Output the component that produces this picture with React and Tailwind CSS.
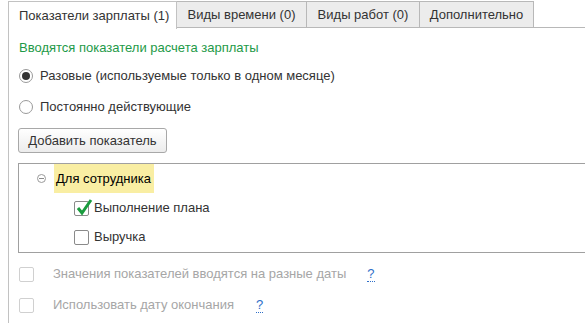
import React from 'react'

const tabs = ['Виды времени (0)', 'Виды работ (0)', 'Дополнительно']

const Radio = ({ checked, label }) => (
  <div className="h-[30px] flex items-center ml-px">
    <span className="w-[14px] h-[14px] rounded-full border border-[#9a9a9a] bg-white flex items-center justify-center">
      {checked && <span className="w-[8px] h-[8px] rounded-full bg-[#333]" />}
    </span>
    <span className="ml-[7px] text-[#333]">{label}</span>
  </div>
)

const Box = ({ checked, disabled }) => (
  <span
    className={`relative w-[15px] h-[15px] flex-none rounded-[2px] border bg-white ${
      disabled ? 'border-[#d0d0d0]' : 'border-[#8a8a8a]'
    }`}
  >
    {checked && (
      <svg className="absolute left-[1px] top-[-4px]" width="17" height="18" viewBox="0 0 17 18">
        <path d="M2 10 L6 15 L15 2" fill="none" stroke="#1a9c3e" strokeWidth="3" strokeLinejoin="miter" />
      </svg>
    )}
  </span>
)

const Help = () => (
  <span className="text-[#2f6fc8] border-b border-dotted border-[#2f6fc8] leading-[13px]">?</span>
)

export default function App() {
  return (
    <div className="w-[585px] h-[323px] bg-white overflow-hidden text-[13px] text-[#333] font-['Liberation_Sans',Arial,sans-serif]">
      <div className="flex h-[28px] pl-[8px]">
        <div className="w-[169px] h-[28px] mt-px border border-b-0 border-[#c2c2c2] bg-white flex items-center pl-[10px]">
          Показатели зарплаты (1)
        </div>
        {tabs.map((t, i) => (
          <div
            key={t}
            className={`h-[27px] mt-px border-t border-r border-b border-[#b8b8b8] bg-[#ececec] flex items-center justify-center ${
              i === 0 ? 'w-[130px]' : i === 1 ? 'w-[113px]' : 'w-[114px]'
            }`}
          >
            {t}
          </div>
        ))}
        <div className="flex-1 h-[28px] border-b border-[#b8b8b8]" />
      </div>

      <div className="ml-[8px] h-[295px] border-l border-[#c2c2c2] pl-[9px] flex flex-col items-start">
        <div className="mt-[12px] ml-px h-[16px] leading-[16px] text-[#1e9a48]">
          Вводятся показатели расчета зарплаты
        </div>
        <div className="mt-[5px]">
          <Radio checked label="Разовые (используемые только в одном месяце)" />
          <div className="mt-px">
            <Radio label="Постоянно действующие" />
          </div>
        </div>
        <button className="mt-[6px] h-[25px] w-[149px] rounded-[3px] border border-[#a8a8a8] bg-gradient-to-b from-white to-[#ececec] text-[#333] text-[13px] flex items-center justify-center">
          Добавить показатель
        </button>
        <div className="mt-[10px] w-[600px] h-[90px] flex-none border border-[#a0a0a0]">
          <div className="h-[29px] flex items-center">
            <span className="ml-[18px] w-[9px] h-[9px] rounded-full border border-[#9a9a9a] flex items-center justify-center">
              <span className="w-[5px] h-px bg-[#8a8a8a]" />
            </span>
            <span className="ml-[8px] h-[29px] w-[100px] bg-[#f9eea3] flex items-center pl-[2px] text-black">
              Для сотрудника
            </span>
          </div>
          <div className="h-[30px] flex items-center pl-[55px]">
            <Box checked />
            <span className="ml-[5px]">Выполнение плана</span>
          </div>
          <div className="h-[28px] flex items-center pl-[55px]">
            <Box />
            <span className="ml-[5px]">Выручка</span>
          </div>
        </div>
        <div className="mt-[6px] h-[30px] flex items-center ml-px text-[#a6a6a6]">
          <Box disabled />
          <span className="ml-[19px]">Значения показателей вводятся на разные даты</span>
          <span className="ml-[21px]"><Help /></span>
        </div>
        <div className="mt-px h-[30px] flex items-center ml-px text-[#a6a6a6]">
          <Box disabled />
          <span className="ml-[19px]">Использовать дату окончания</span>
          <span className="ml-[22px]"><Help /></span>
        </div>
      </div>
    </div>
  )
}
